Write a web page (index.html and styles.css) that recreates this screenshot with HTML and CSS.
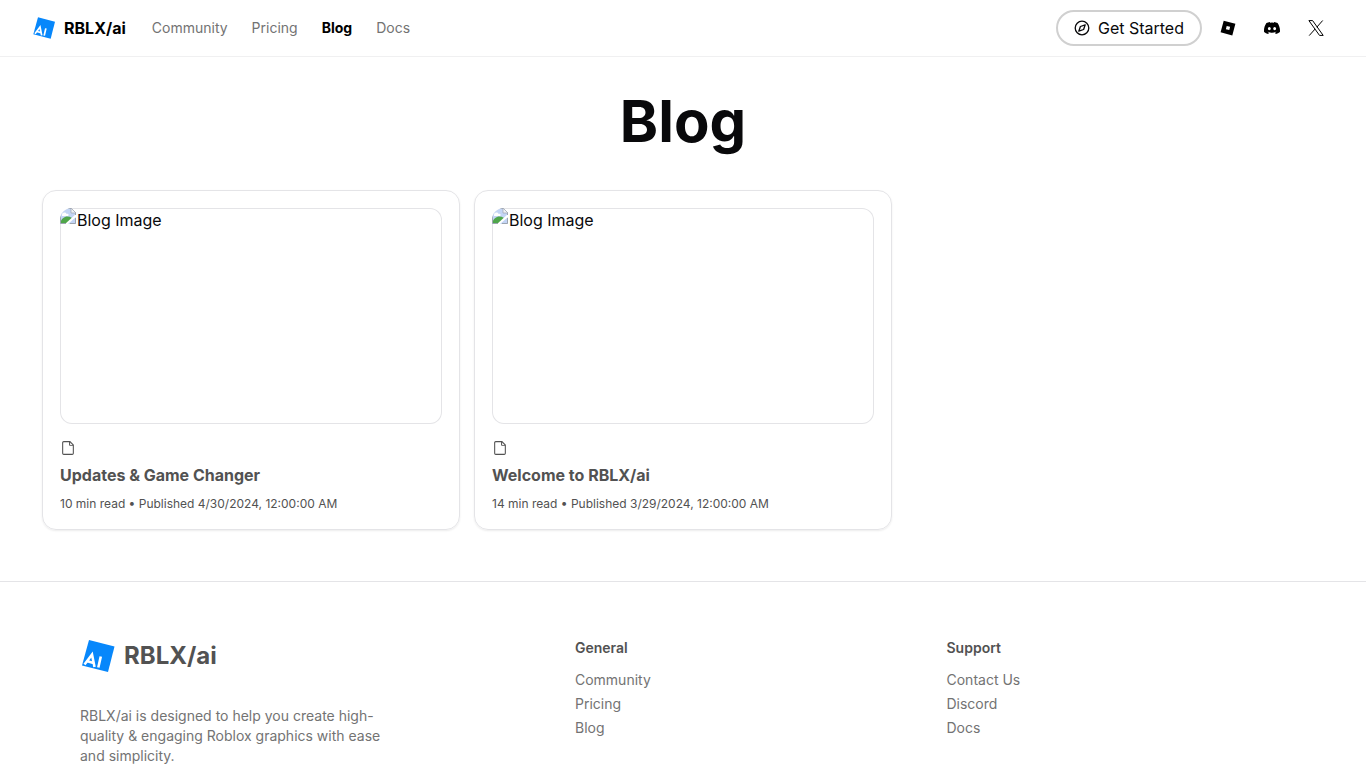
FILE: index.html
```html
<!DOCTYPE html>
<html lang="en">
<head>
<meta charset="utf-8">
<meta name="viewport" content="width=device-width, initial-scale=1">
<title>Blog - RBLX/ai</title>
<link rel="stylesheet" href="styles.css">
</head>
<body>
<svg class="sprite" aria-hidden="true">
  <symbol id="logo" viewBox="0 0 36 36">
    <path d="M9 2L34.500 8.500L28 34L2 27.500Z" fill="#0787fb"/>
    <g fill="none" stroke="#fff" stroke-width="2.600"><path d="M4.500 26.500L12 16.500L14.500 29M7.500 23.300L13.500 24.900M20.800 18.500L18.300 29.500"/></g>
  </symbol>
  <symbol id="file" viewBox="0 0 15 15">
    <path fill="currentColor" fill-rule="evenodd" d="M3 2.500C3 2.224 3.224 2 3.500 2H8.500V4.500C8.500 5.052 8.948 5.500 9.500 5.500H12V12.500C12 12.776 11.776 13 11.500 13H3.500C3.224 13 3 12.776 3 12.500V2.500ZM9.500 2.400L11.700 4.600H9.500V2.400ZM3.500 1C2.672 1 2 1.672 2 2.500V12.500C2 13.328 2.672 14 3.500 14H11.500C12.328 14 13 13.328 13 12.500V4.500L9.500 1H3.500Z"/>
  </symbol>
  <symbol id="broken" viewBox="0 0 16 16">
    <path d="M0 0H11L16 5V16H0Z" fill="#c3d5f5"/>
    <path d="M2 7C2 4 6 4 6.500 6C9 5 9 8 8 8H2Z" fill="#fff"/>
    <path d="M0 15C2 9 7 7 12 10L8 15Z" fill="#4fa64a"/>
    <path d="M16 6V9L8 16H5Z" fill="#fff"/>
    <path d="M.5 15.500V.5H11L15.500 5V7M.5 15.500H6M10 15.500H15.500V10" fill="none" stroke="#9da5b0"/>
    <path d="M11 0V5H16Z" fill="#eef1f5" stroke="#9da5b0" stroke-width=".7"/>
  </symbol>
</svg>

<header class="header">
  <a class="brand" href="#"><svg class="brand-logo" aria-hidden="true"><use href="#logo"/></svg>RBLX/ai</a>
  <nav class="nav" aria-label="Main">
    <a href="#">Community</a>
    <a href="#">Pricing</a>
    <a class="active" href="#" aria-current="page">Blog</a>
    <a href="#">Docs</a>
  </nav>
  <div class="actions">
    <button class="start" type="button">
      <svg width="16" height="16" viewBox="0 0 16 16" fill="none" stroke="currentColor" stroke-width="1.300" aria-hidden="true"><circle cx="8" cy="8" r="6.800"/><path d="M11.200 4.800L9.600 9.500L4.800 11.200L6.400 6.500Z" stroke-linejoin="round"/></svg>
      Get Started
    </button>
    <a class="social" href="#" aria-label="Roblox"><svg width="16" height="16" viewBox="0 0 16 16" aria-hidden="true"><path fill="currentColor" fill-rule="evenodd" d="M3.700 .7L15.400 3.700L12.300 15.400L.6 12.300ZM6.700 5.900L5.900 9.300L9.300 10.100L10.100 6.700Z"/></svg></a>
    <a class="social" href="#" aria-label="Discord"><svg width="16" height="16" viewBox="0 0 16 16" aria-hidden="true"><path fill="currentColor" d="M13.545 2.907a13.227 13.227 0 0 0-3.257-1.011.050.050 0 0 0-.052.025c-.141.250-.297.577-.406.833a12.190 12.190 0 0 0-3.658 0 8.258 8.258 0 0 0-.412-.833.051.051 0 0 0-.052-.025c-1.125.194-2.220.534-3.257 1.011a.041.041 0 0 0-.021.018C.356 6.024-.213 9.047.066 12.032c.001.014.010.028.021.037a13.276 13.276 0 0 0 3.995 2.020.050.050 0 0 0 .056-.019c.308-.420.582-.863.818-1.329a.050.050 0 0 0-.028-.070 8.735 8.735 0 0 1-1.248-.595.050.050 0 0 1-.005-.085c.084-.063.168-.129.248-.195a.050.050 0 0 1 .051-.007c2.619 1.196 5.454 1.196 8.041 0a.052.052 0 0 1 .053.007c.080.066.164.132.248.195a.051.051 0 0 1-.004.085 8.254 8.254 0 0 1-1.249.594.050.050 0 0 0-.027.071c.240.465.515.909.817 1.329a.050.050 0 0 0 .056.019 13.235 13.235 0 0 0 4.001-2.020.049.049 0 0 0 .021-.037c.334-3.451-.559-6.449-2.366-9.106a.034.034 0 0 0-.020-.019ZM5.347 10.214c-.789 0-1.438-.724-1.438-1.612 0-.889.637-1.613 1.438-1.613.807 0 1.450.730 1.438 1.613 0 .888-.637 1.612-1.438 1.612Zm5.316 0c-.788 0-1.438-.724-1.438-1.612 0-.889.637-1.613 1.438-1.613.807 0 1.451.730 1.438 1.613 0 .888-.631 1.612-1.438 1.612Z"/></svg></a>
    <a class="social" href="#" aria-label="X"><svg width="16" height="16" viewBox="0 0 16 16" fill="none" stroke="currentColor" aria-hidden="true"><path d="M.9 .6H4.600L15.200 15.400H11.500ZM14.700 .5L8.800 7.200M7.200 8.900L1.200 15.600"/></svg></a>
  </div>
</header>

<main class="main">
  <h1>Blog</h1>
  <div class="grid">
    <article class="card">
      <div class="thumb" role="img" aria-label="Blog Image"><svg width="16" height="16" aria-hidden="true"><use href="#broken"/></svg>Blog Image</div>
      <svg class="file" aria-hidden="true"><use href="#file"/></svg>
      <h2>Updates &amp; Game Changer</h2>
      <p>10 min read • Published 4/30/2024, 12:00:00 AM</p>
    </article>
    <article class="card">
      <div class="thumb" role="img" aria-label="Blog Image"><svg width="16" height="16" aria-hidden="true"><use href="#broken"/></svg>Blog Image</div>
      <svg class="file" aria-hidden="true"><use href="#file"/></svg>
      <h2>Welcome to RBLX/ai</h2>
      <p>14 min read • Published 3/29/2024, 12:00:00 AM</p>
    </article>
  </div>
</main>

<footer class="footer">
  <div class="about">
    <a class="footer-brand" href="#"><svg class="footer-logo" aria-hidden="true"><use href="#logo"/></svg>RBLX/ai</a>
    <p>RBLX/ai is designed to help you create high-quality &amp; engaging Roblox graphics with ease and simplicity.</p>
  </div>
  <nav class="links" aria-label="General">
    <h3>General</h3>
    <a href="#">Community</a>
    <a href="#">Pricing</a>
    <a href="#">Blog</a>
  </nav>
  <nav class="links" aria-label="Support">
    <h3>Support</h3>
    <a href="#">Contact Us</a>
    <a href="#">Discord</a>
    <a href="#">Docs</a>
  </nav>
</footer>
</body>
</html>
```
FILE: styles.css
```css
* { box-sizing: border-box; }
body {
  margin: 0;
  background: #fff;
  color: #09090b;
  font: 16px/24px Inter, "Liberation Sans", sans-serif;
}
h1, h2, h3, p { margin: 0; }
a { color: inherit; text-decoration: none; }
svg { display: block; flex: none; }
.sprite { position: absolute; width: 0; height: 0; }

.header {
  display: flex;
  align-items: center;
  height: 57px;
  padding: 0 32px;
  border-bottom: 1px solid #f0f0f1;
}
.brand {
  display: flex;
  align-items: center;
  gap: 8px;
  margin-right: 26px;
  font-weight: 700;
  color: #000;
}
.brand-logo { width: 24px; height: 24px; }
.nav { display: flex; gap: 24px; font-size: 14px; color: #737373; }
.nav .active { color: #000; font-weight: 700; }
.actions { display: flex; align-items: center; margin-left: auto; }
.start {
  display: flex;
  align-items: center;
  gap: 8px;
  height: 36px;
  margin-right: 4px;
  padding: 0 16px;
  border: 2px solid #d0d0d0;
  border-radius: 18px;
  background: #fff;
  color: #09090b;
  font: inherit;
}
.social {
  display: grid;
  place-items: center;
  width: 44px;
  height: 36px;
  color: #000;
}
.social:last-child { margin-right: -4px; }

.main { padding: 35px 42px 51px; }
h1 {
  margin-bottom: 40px;
  font-size: 58px;
  line-height: 58px;
  font-weight: 700;
  text-align: center;
}
.grid {
  display: grid;
  grid-template-columns: repeat(3, 1fr);
  gap: 14px;
}
.card {
  padding: 17px;
  border: 1px solid #e4e4e7;
  border-radius: 14px;
  box-shadow: 0 1px 2px rgba(0, 0, 0, .08);
  color: #525252;
}
.thumb {
  display: flex;
  gap: 1px;
  aspect-ratio: 382 / 216;
  border-radius: 12px;
  box-shadow: inset 0 0 0 1px #e4e4e7;
  overflow: hidden;
  color: #09090b;
}
.file { width: 16px; height: 16px; margin: 16px 0 7px; }
.card h2 { font-size: 16px; line-height: 24px; font-weight: 700; }
.card p { margin-top: 9px; font-size: 12px; line-height: 16px; }

.footer {
  display: grid;
  grid-template-columns: 15fr 11fr 11fr;
  gap: 32px;
  padding: 54px 80px 0;
  border-top: 1px solid #e4e4e7;
  font-size: 14px;
  color: #737373;
}
.footer-brand {
  display: flex;
  align-items: center;
  gap: 8px;
  height: 40px;
  font-size: 24px;
  font-weight: 700;
  color: #525252;
}
.footer-logo { width: 36px; height: 36px; }
.about p { max-width: 320px; margin-top: 30px; line-height: 20px; }
.links { display: flex; flex-direction: column; align-items: flex-start; }
.links h3 { margin-bottom: 8px; font-size: 14px; line-height: 24px; font-weight: 600; color: #525252; }
```
